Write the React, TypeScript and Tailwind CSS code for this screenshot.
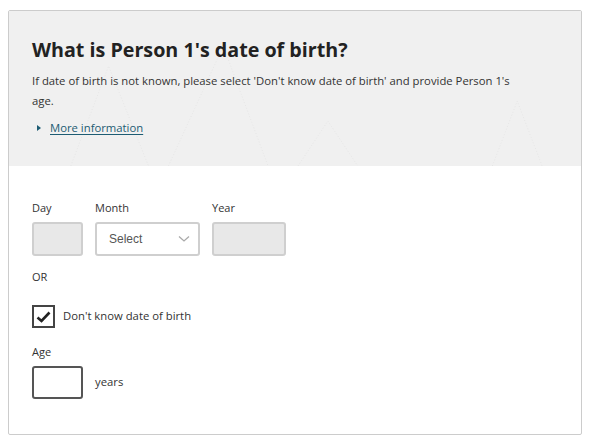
import React from 'react'

const font = { fontFamily: '"Open Sans", "Noto Sans", Arial, sans-serif' }

function Watermark() {
  // faint triangle shapes behind the header text
  return (
    <svg className="absolute inset-0 h-full w-full pointer-events-none" viewBox="0 0 574 155" preserveAspectRatio="none">
      <g fill="none" stroke="#e6e6e6" strokeWidth="1" strokeDasharray="1 2">
        <polyline points="62,155 100,55 140,155" />
        <polyline points="160,155 215,35 260,155" />
        <polyline points="485,155 510,90 535,155" />
        <polyline points="290,155 320,110 350,155" />
      </g>
    </svg>
  )
}

export default function App() {
  return (
    <div className="min-h-screen bg-white pt-[10px] pl-[8px]" style={font}>
      <div className="w-[574px] h-[425px] border border-[#cccccc] rounded-[2px] overflow-hidden bg-white">
        <div className="relative h-[155px] bg-[#f0f0f0] px-[23px] pt-[25px]">
          <Watermark />
          <div className="relative">
            <h1 className="text-[19.7px] leading-[28px] font-bold text-[#222222]">What is Person 1's date of birth?</h1>
            <p className="mt-[7px] w-[490px] text-[11.3px] leading-[20px] text-[#333333]">
              If date of birth is not known, please select 'Don't know date of birth' and provide Person 1's age.
            </p>
            <div className="mt-[8px] flex items-center gap-[9px] text-[11.3px] leading-[18px]">
              <span className="ml-[5px] inline-block w-0 h-0 border-y-[3px] border-y-transparent border-l-[4px] border-l-[#1d5c73]" />
              <a className="text-[#1d5c73] underline underline-offset-2">More information</a>
            </div>
          </div>
        </div>

        <div className="px-[23px] pt-[34px]">
          <div className="flex gap-[12px]">
            <div className="flex flex-col">
              <label className="text-[11px] leading-[16px] text-[#333333]">Day</label>
              <div className="mt-[6px] w-[51px] h-[34px] bg-[#e8e8e8] border-2 border-[#cfcfcf] rounded-[3px]" />
            </div>
            <div className="flex flex-col">
              <label className="text-[11px] leading-[16px] text-[#333333]">Month</label>
              <div className="mt-[6px] w-[105px] h-[34px] bg-white border-2 border-[#cfcfcf] rounded-[3px] flex items-center justify-between pl-[12px] pr-[8px]">
                <span className="text-[12px] text-[#555555]" style={{ fontFamily: '"Liberation Sans", Arial, sans-serif' }}>Select</span>
                <svg width="12" height="8" viewBox="0 0 12 8">
                  <polyline points="1,1.5 6,6 11,1.5" fill="none" stroke="#aaaaaa" strokeWidth="1.3" />
                </svg>
              </div>
            </div>
            <div className="flex flex-col">
              <label className="text-[11px] leading-[16px] text-[#333333]">Year</label>
              <div className="mt-[6px] w-[74px] h-[34px] bg-[#e8e8e8] border-2 border-[#cfcfcf] rounded-[3px]" />
            </div>
          </div>

          <div className="mt-[13px] text-[11px] leading-[16px] text-[#333333]">OR</div>

          <div className="mt-[20px] flex items-center gap-[8px]">
            <div className="w-[23px] h-[23px] border-2 border-[#444444] bg-white flex items-center justify-center">
              <svg width="15" height="12" viewBox="0 0 15 12">
                <polyline points="1.5,6.5 5.5,10 13.5,1.5" fill="none" stroke="#222222" strokeWidth="2.6" />
              </svg>
            </div>
            <span className="text-[11.3px] text-[#333333]">Don't know date of birth</span>
          </div>

          <div className="mt-[16px] text-[11px] leading-[16px] text-[#333333]">Age</div>
          <div className="mt-[6px] flex items-center gap-[12px]">
            <div className="w-[51px] h-[33px] bg-white border-2 border-[#555555] rounded-[3px]" />
            <span className="text-[11.3px] text-[#333333]">years</span>
          </div>
        </div>
      </div>
    </div>
  )
}
